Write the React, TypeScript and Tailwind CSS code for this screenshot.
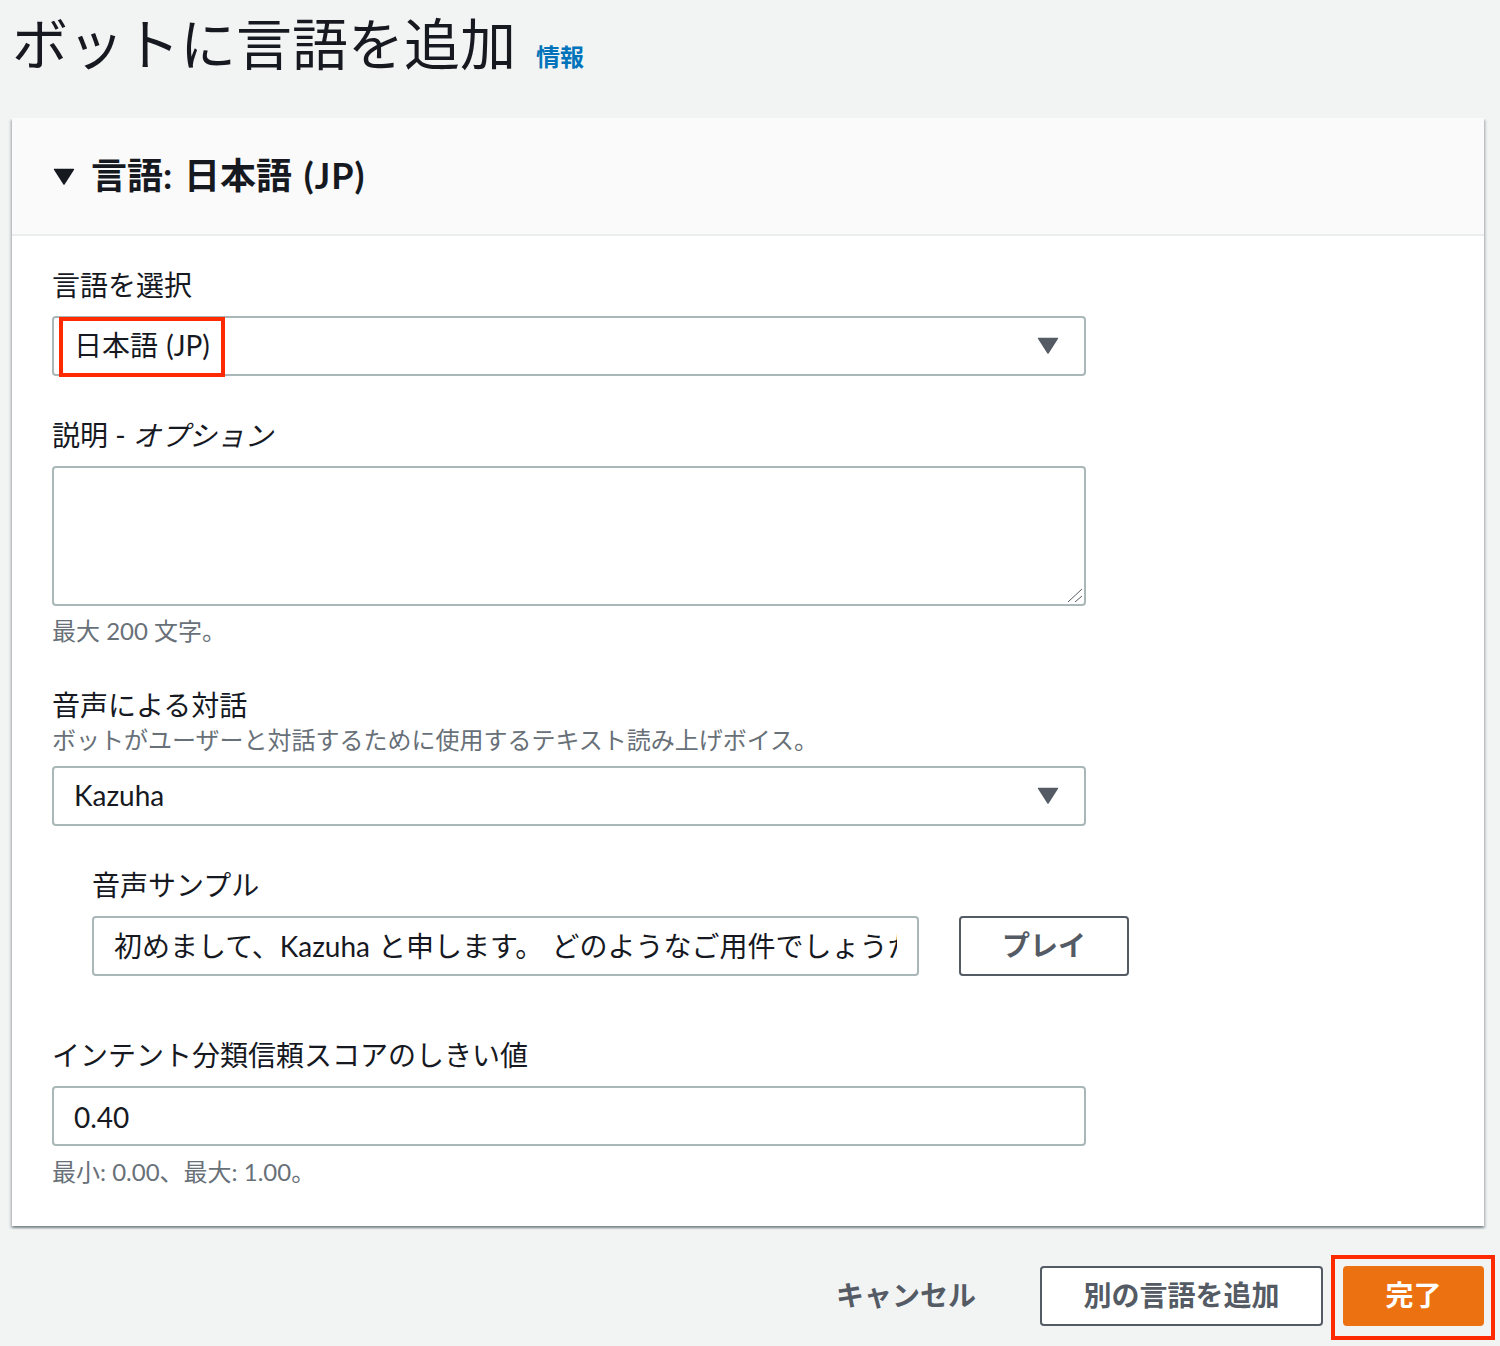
import React from 'react';

const font = { fontFamily: 'Lato, "Noto Sans CJK JP", sans-serif' };

function Caret({ className }: { className: string }) {
  return (
    <svg viewBox="0 0 22 18" className={className} fill="currentColor">
      <path d="M1 1.5 H21 L11 17 Z" stroke="currentColor" strokeWidth="1.5" strokeLinejoin="round" />
    </svg>
  );
}

function Label({ children }: { children: React.ReactNode }) {
  return <div className="pt-[2px] text-[28px] leading-[38px] text-[#16191f]">{children}</div>;
}

function Hint({ children }: { children: React.ReactNode }) {
  return <div className="text-[24px] leading-[32px] text-[#687078]">{children}</div>;
}

function SelectBox({ children }: { children: React.ReactNode }) {
  return (
    <div className="relative flex h-[60px] w-[1034px] items-center justify-between rounded-[4px] border-2 border-[#aab7b8] bg-white pb-[2px] pl-[20px] pr-[25px] text-[28px] text-[#16191f]">
      {children}
      <Caret className="h-[17px] w-[22px] text-[#545b64]" />
    </div>
  );
}

export default function App() {
  return (
    <div style={font} className="h-[1346px] w-[1500px] overflow-hidden bg-[#f2f3f3] pl-[12px] pr-[16px] antialiased">
      <div className="flex h-[118px] items-start pt-[4px]">
        <h1 className="text-[56px] leading-[80px] font-normal text-[#16191f]">ボットに言語を追加</h1>
        <a className="ml-[20px] mt-[35px] text-[24px] leading-[36px] font-bold text-[#0073bb]">情報</a>
      </div>

      <div className="bg-white shadow-[0_2px_2px_0_rgba(0,28,36,0.3),2px_2px_2px_0_rgba(0,28,36,0.15),-2px_2px_2px_0_rgba(0,28,36,0.15)]">
        <div className="flex h-[118px] items-center gap-[16px] border-b-2 border-[#eaeded] bg-[#fafafa] pl-[41px]">
          <Caret className="h-[17px] w-[22px] text-[#16191f]" />
          <h2 className="pb-[2px] text-[36px] leading-[48px] font-bold text-[#16191f] [word-spacing:3px]">
            言語: 日本語 <span className="tracking-[1px]">(JP)</span>
          </h2>
        </div>

        <div className="flex h-[990px] flex-col px-[40px] pt-[28px]">
          <Label>言語を選択</Label>
          <div className="mt-[12px]">
            <SelectBox>
              <span className="[word-spacing:1px]">日本語 (JP)</span>
              <div className="absolute left-[5px] top-[-1px] h-[60px] w-[166px] border-[4px] border-[#ff2a00]" />
            </SelectBox>
          </div>

          <div className="mt-[38px]">
            <Label>
              説明 - <i>オプション</i>
            </Label>
          </div>
          <div className="relative mt-[12px] h-[140px] w-[1034px]">
            <textarea className="block h-full w-full resize-none rounded-[4px] border-2 border-[#aab7b8] bg-white" />
            <svg viewBox="0 0 16 16" className="absolute bottom-[2px] right-[2px] h-[16px] w-[16px] text-[#545b64]" fill="none" stroke="currentColor">
              <path d="M0 14 L14 1 M7 14 L14 8" />
            </svg>
          </div>
          <div className="mt-[9px]">
            <Hint>最大 200 文字。</Hint>
          </div>

          <div className="mt-[37px]">
            <Label>音声による対話</Label>
          </div>
          <div>
            <Hint>ボットがユーザーと対話するために使用するテキスト読み上げボイス。</Hint>
          </div>
          <div className="mt-[10px]">
            <SelectBox>
              <span>Kazuha</span>
            </SelectBox>
          </div>

          <div className="pl-[40px] pt-[38px]">
            <Label>音声サンプル</Label>
            <div className="mt-[12px] flex gap-[40px]">
              <input
                readOnly
                value="初めまして、Kazuha と申します。 どのようなご用件でしょうか?"
                className="h-[60px] w-[827px] rounded-[4px] border-2 border-[#aab7b8] bg-white px-[20px] pb-[2px] text-[28px] text-[#16191f] outline-none [word-spacing:1px]"
              />
              <button className="h-[60px] w-[170px] rounded-[4px] border-2 border-[#545b64] bg-white pb-[2px] text-[28px] font-bold text-[#545b64]">
                プレイ
              </button>
            </div>
          </div>

          <div className="mt-[58px]">
            <Label>インテント分類信頼スコアのしきい値</Label>
          </div>
          <div className="mt-[12px] flex h-[60px] w-[1034px] items-center rounded-[4px] border-2 border-[#aab7b8] bg-white pl-[20px] pt-[2px] text-[28px] text-[#16191f]">
            0.40
          </div>
          <div className="mt-[10px]">
            <Hint>最小: 0.00、最大: 1.00。</Hint>
          </div>
        </div>
      </div>

      <div className="flex items-center justify-end gap-[20px] pt-[40px]">
        <button className="mr-[44px] pb-[2px] text-[28px] font-bold text-[#545b64]">キャンセル</button>
        <button className="h-[60px] w-[283px] rounded-[4px] border-2 border-[#545b64] bg-white pb-[2px] text-[28px] font-bold text-[#545b64]">
          別の言語を追加
        </button>
        <div className="relative">
          <button className="block h-[60px] w-[141px] rounded-[4px] bg-[#ec7211] pb-[2px] text-[28px] font-bold text-white">完了</button>
          <div className="absolute left-[-12px] top-[-11px] h-[85px] w-[164px] border-[4px] border-[#ff2a00]" />
        </div>
      </div>
    </div>
  );
}
